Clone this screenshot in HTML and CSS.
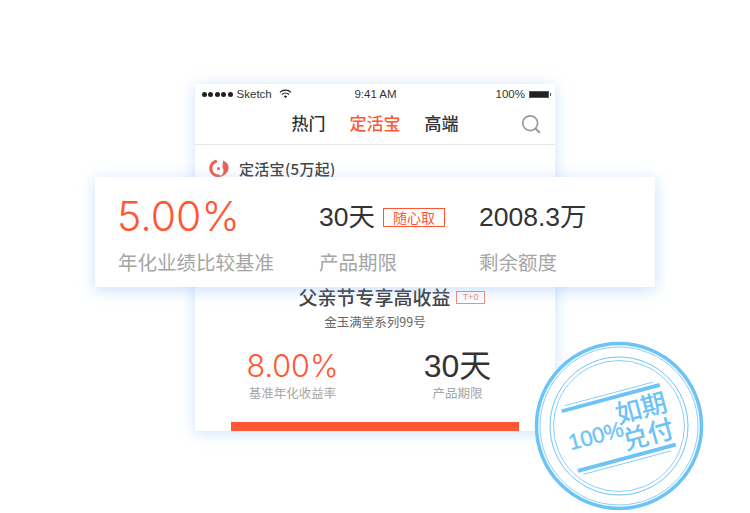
FILE: index.html
```html
<!DOCTYPE html>
<html lang="zh">
<head>
    <meta charset="UTF-8">
    <title>定活宝</title>
    <link rel="stylesheet" href="styles.css">
</head>
<body>
    <div class="phone">
        <div class="status">
            <div class="status-left">
                <span class="dots"><i></i><i></i><i></i><i></i><i></i></span>
                <span>Sketch</span>
                <svg class="wifi" width="13" height="10" viewBox="0 0 13 10"><path d="M1 3.4a8 8 0 0 1 11 0M3 5.500a5 5 0 0 1 7 0" fill="none" stroke="#222" stroke-width="1.3"/><path d="M4.900 7.300a2.400 2.400 0 0 1 3.200 0L6.500 9.200z" fill="#222"/></svg>
            </div>
            <div class="status-time">9:41 AM</div>
            <div class="status-right">
                <span>100%</span>
                <span class="battery"></span>
            </div>
        </div>
        <div class="tabs">
            <span>热门</span>
            <span class="on">定活宝</span>
            <span>高端</span>
            <svg class="search" width="20" height="20" viewBox="0 0 20 20"><circle cx="9.200" cy="9.200" r="7.400" fill="none" stroke="#999" stroke-width="1.700"/><path d="M14.600 14.600l3.600 3.600" stroke="#999" stroke-width="2" stroke-linecap="round"/></svg>
        </div>
        <div class="section">
            <svg width="22" height="20" viewBox="0 0 22 20"><path d="M7.500 2.500C3.800 4 2.200 7.500 3 11c.8 3.500 4 6 8 6" fill="none" stroke="#ee5f52" stroke-width="3.200" stroke-linecap="round"/><path d="M15 1.500c4 1.500 6 4.500 5.500 8-.6 4.500-4.500 8-9.500 8.500 3-1.500 4-3.500 4.500-5.500.4-1.800-1-3-1-5 0-2.200.5-4 .5-6z" fill="#ee5f52"/><circle cx="10.500" cy="9.500" r="1.500" fill="#ee5f52"/></svg>
            <span>定活宝(5万起)</span>
        </div>
        <div class="product">
            <div class="product-title">
                <span>父亲节专享高收益</span>
                <span class="tag-small">T+0</span>
            </div>
            <div class="product-sub">金玉满堂系列99号</div>
            <div class="product-stats">
                <div class="stat">
                    <div class="stat-num red">8.00%</div>
                    <div class="stat-label">基准年化收益率</div>
                </div>
                <div class="stat">
                    <div class="stat-num">30天</div>
                    <div class="stat-label">产品期限</div>
                </div>
            </div>
            <div class="buy-bar"></div>
        </div>
    </div>

    <div class="card">
        <div class="col col-rate">
            <div class="rate">5.00%</div>
            <div class="col-label">年化业绩比较基准</div>
        </div>
        <div class="col col-term">
            <div class="col-value">30天<span class="tag">随心取</span></div>
            <div class="col-label">产品期限</div>
        </div>
        <div class="col">
            <div class="col-value">2008.3万</div>
            <div class="col-label">剩余额度</div>
        </div>
    </div>

    <svg class="stamp" width="172" height="172" viewBox="0 0 172 172">
        <circle cx="86" cy="86" r="82.500" fill="#fff" stroke="#6cc3f7" stroke-width="3.500"/>
        <circle cx="86" cy="86" r="79" fill="none" stroke="#6cc3f7" stroke-width=".8"/>
        <circle cx="86" cy="86" r="69" fill="none" stroke="#6cc3f7" stroke-width="1"/>
        <circle cx="86" cy="86" r="65.500" fill="none" stroke="#6cc3f7" stroke-width=".8"/>
        <g transform="rotate(-15 86 86)" fill="#6cc3f7" font-family="'Noto Sans CJK SC', sans-serif">
            <rect x="34.500" y="55" width="101.500" height="3.800"/>
            <rect x="39" y="52" width="91" height=".8"/>
            <rect x="34.700" y="116.800" width="101.300" height="3.800"/>
            <rect x="39" y="123.200" width="91" height=".8"/>
            <text x="33" y="97" font-size="22" stroke="#6cc3f7" stroke-width=".4" font-family="'Liberation Sans', sans-serif">100%</text>
            <text x="86" y="84" font-size="26" font-weight="500">如期</text>
            <text x="86" y="111" font-size="26" font-weight="500">兑付</text>
        </g>
    </svg>
</body>
</html>
```

FILE: styles.css
```css
html, body { height: 100%; }
body { margin: 0; background: #fff; position: relative; overflow: hidden; font-family: "Liberation Sans", "Noto Sans CJK SC", sans-serif; color: #333; }

.phone { width: 360px; height: 347px; margin: 84px 0 0 195px; background: #fff; box-shadow: 0 2px 14px rgba(110, 170, 245, 0.35); }

.status { height: 20px; padding: 0 6px 0 7px; display: flex; align-items: center; justify-content: space-between; font-size: 11.5px; color: #333; }
.status-left { display: flex; align-items: center; gap: 4px; width: 125px; }
.status-right { display: flex; align-items: center; justify-content: flex-end; gap: 4px; width: 125px; }
.status-time { text-align: center; }
.dots { display: flex; gap: 1.4px; }
.dots i { width: 5px; height: 5px; border-radius: 50%; background: #222; }
.wifi { margin-left: 3px; }
.battery { width: 20px; height: 7px; background: #222; border: 1px solid #555; box-sizing: border-box; position: relative; }
.battery::after { content: ""; position: absolute; right: -3px; top: 1px; width: 1px; height: 3px; background: #555; }

.tabs { height: 41px; box-sizing: border-box; padding-bottom: 4px; border-bottom: 1px solid #e6e6e6; display: flex; align-items: center; justify-content: center; gap: 24px; font-size: 17px; font-weight: 500; font-family: "Noto Sans CJK SC", sans-serif; position: relative; color: #333; }
.tabs .on { color: #ff5733; }
.search { position: absolute; right: 14px; top: 10px; }

.section { display: flex; align-items: center; gap: 9px; padding: 13px 0 0 13px; font-size: 15px; letter-spacing: .3px; font-weight: 500; font-family: "Noto Sans CJK SC", sans-serif; color: #444; }

.product { margin-top: 105px; text-align: center; }
.product-title { display: flex; justify-content: center; align-items: center; gap: 5px; font-size: 19px; line-height: 26px; font-weight: 500; font-family: "Noto Sans CJK SC", sans-serif; color: #444; padding-left: 34px; }
.tag-small { border: 1px solid #f58a7a; color: #f58a7a; font-size: 9px; line-height: 11px; padding: 0 6px; font-family: "Liberation Sans", sans-serif; font-weight: 400; }
.product-sub { font-size: 12.5px; line-height: 18px; margin-top: 3px; color: #666; font-family: "Noto Sans CJK SC", sans-serif; }
.product-stats { display: flex; margin-top: 17px; padding: 0 15px; }
.stat { width: 165px; text-align: center; }
.stat-num { font-size: 32px; line-height: 36px; color: #333; }
.stat-num.red { color: #ff5733; font-family: Inter, sans-serif; font-weight: 300; font-size: 30.5px; }
.stat-label { font-size: 12.5px; line-height: 18px; color: #a5a5a5; font-family: "Noto Sans CJK SC", sans-serif; }
.buy-bar { height: 9px; background: #ff5733; margin: 20px 36px 0; }

.card { position: absolute; left: 95px; top: 177px; width: 560px; height: 110px; box-sizing: border-box; padding: 0 0 0 23px; background: #fff; display: flex; box-shadow: 0 3px 14px rgba(110, 170, 245, 0.38); }
.col { width: 160px; }
.col-rate { width: 201px; }
.col-term { width: 160px; }
.rate { font-family: Inter, sans-serif; font-weight: 300; font-size: 41px; line-height: 50px; margin: 14px 0 0 -1px; color: #ff5733; }
.col-value { font-size: 26.5px; line-height: 40px; margin-top: 20px; color: #333; display: flex; align-items: center; }
.col-label { font-size: 19.5px; line-height: 28px; margin-top: 7px; color: #a5a5a5; font-family: "Noto Sans CJK SC", sans-serif; }
.col-term .col-label, .col:last-child .col-label { margin-top: 11px; }
.tag { margin-left: 8px; border: 1.5px solid #ff5733; color: #ff5733; font-size: 14px; line-height: 17px; padding: 0 9px; font-family: "Noto Sans CJK SC", sans-serif; }

.stamp { position: absolute; left: 533px; top: 340px; }
```
